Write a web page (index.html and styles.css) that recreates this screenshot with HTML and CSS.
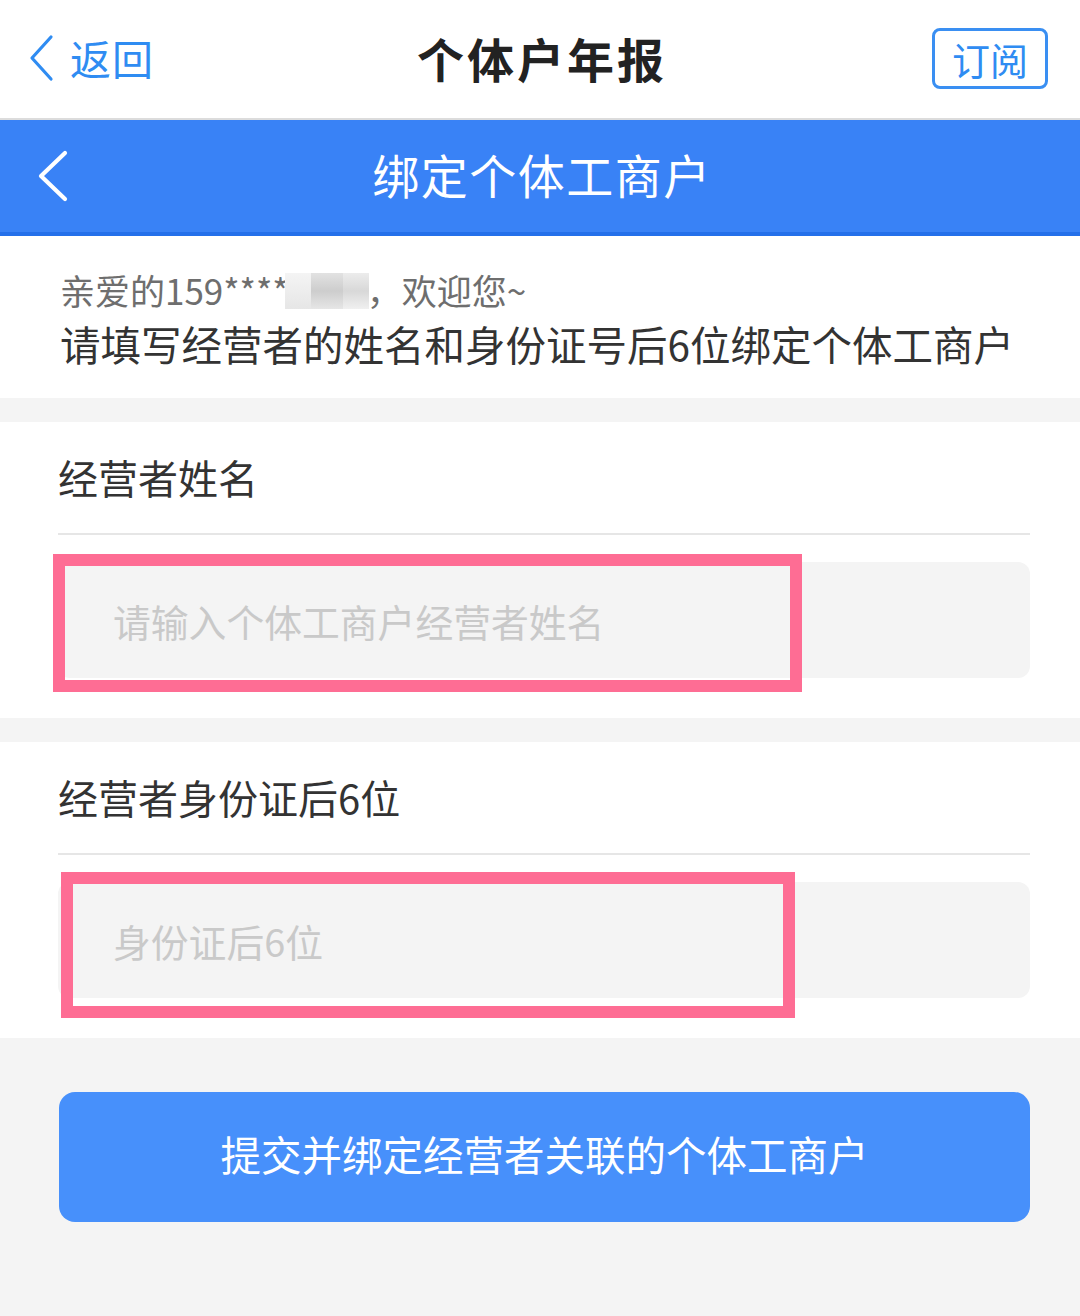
FILE: index.html
```html
<!DOCTYPE html>
<html lang="zh-CN">
<head>
<meta charset="utf-8">
<title>绑定个体工商户</title>
<link rel="stylesheet" href="styles.css">
</head>
<body>
<div class="page">
  <header class="topnav">
    <div class="back">
      <svg class="back-chev" width="26" height="48" viewBox="0 0 26 48"><path d="M23 3 L4 24 L23 45" fill="none" stroke="#2f8cf2" stroke-width="3.2" stroke-linecap="round" stroke-linejoin="round"/></svg>
      <span class="back-text">返回</span>
    </div>
    <div class="nav-title">个体户年报</div>
    <div class="subscribe">订阅</div>
  </header>

  <div class="bluebar">
    <svg class="bar-chev" width="34" height="54" viewBox="0 0 34 54"><path d="M29 4 L5 27 L29 50" fill="none" stroke="#ffffff" stroke-width="4.2" stroke-linecap="round" stroke-linejoin="round"/></svg>
    <div class="bar-title">绑定个体工商户</div>
    <div class="bar-spacer"></div>
  </div>

  <section class="intro">
    <div class="greet"><span class="num">亲爱的159****<span class="blur"><i class="b1"></i><i class="b2"></i><i class="b3"></i></span></span>，欢迎您~</div>
    <div class="lead">请填写经营者的姓名和身份证号后6位绑定个体工商户</div>
  </section>

  <section class="field">
    <div class="label">经营者姓名</div>
    <div class="divider"></div>
    <div class="input"><span class="ph">请输入个体工商户经营者姓名</span></div>
    <div class="mark mark-1"></div>
  </section>

  <section class="field">
    <div class="label">经营者身份证后6位</div>
    <div class="divider"></div>
    <div class="input"><span class="ph">身份证后6位</span></div>
    <div class="mark mark-2"></div>
  </section>

  <div class="actions">
    <button class="submit">提交并绑定经营者关联的个体工商户</button>
  </div>
</div>
</body>
</html>
```

FILE: styles.css
```css
* { box-sizing: border-box; }
html, body { margin: 0; padding: 0; }
body {
  background: #f4f4f4;
  font-family: "Noto Sans CJK SC", "Noto Sans", sans-serif;
  color: #333;
}
.page { width: 1080px; min-height: 1316px; background: #f4f4f4; }

.topnav {
  height: 120px;
  background: #fff;
  border-bottom: 2px solid #dcdcdc;
  display: grid;
  grid-template-columns: 1fr auto 1fr;
  align-items: center;
  padding: 0 32px 0 28px;
}
.back { display: flex; align-items: center; gap: 16px; color: #2f8cf2; margin-top: -3px; }
.back-chev { display: block; }
.back-text { font-size: 41px; line-height: 1; letter-spacing: 1px; }
.nav-title { font-size: 47px; font-weight: 700; color: #222; letter-spacing: 3px; line-height: 1; margin: -4px 0 0 8px; }
.subscribe {
  justify-self: end;
  width: 116px; height: 61px;
  border: 3px solid #3a8ff2;
  border-radius: 8px;
  color: #2f8cf2;
  font-size: 38px;
  display: flex; align-items: center; justify-content: center;
  margin-top: -2px;
}

.bluebar {
  height: 116px;
  background: #3982f6;
  border-bottom: 4px solid #2470ea;
  display: grid;
  grid-template-columns: 1fr auto 1fr;
  align-items: center;
  padding: 0 36px;
}
.bar-chev { display: block; }
.bar-title { color: #fff; font-size: 47px; letter-spacing: 1.5px; line-height: 1; margin: -6px 0 0 4px; }

.intro {
  background: #fff;
  padding: 31px 60px 26px;
  margin-bottom: 24px;
}
.greet { font-size: 35px; line-height: 46px; color: #6e6e6e; display: flex; align-items: center; white-space: nowrap; }
.num { position: relative; margin-right: 78px; }
.blur { position: absolute; right: -80px; top: 6px; display: flex; width: 84px; height: 36px; }
.blur i { display: block; height: 100%; }
.blur .b1 { width: 26px; background: linear-gradient(#f4f4f4, #e6e6e6); }
.blur .b2 { width: 32px; background: linear-gradient(#e2e2e2, #cdcdcd 50%, #e6e6e6); }
.blur .b3 { width: 26px; background: linear-gradient(#ececec, #d8d8d8 50%, #f0f0f0); }
.lead { font-size: 40.5px; line-height: 56px; color: #333; margin-top: 3px; white-space: nowrap; }

.field {
  position: relative;
  background: #fff;
  padding: 27px 50px 40px 58px;
  margin-bottom: 24px;
}
.label { font-size: 40px; line-height: 56px; color: #333; }
.divider { height: 2px; background: #e6e6e6; margin-top: 28px; }
.input {
  margin-top: 27px;
  height: 116px;
  background: #f4f4f4;
  border-radius: 12px;
  display: flex; align-items: center;
  padding-left: 55px;
}
.ph { font-size: 37.8px; color: #c9c9c9; }

.mark {
  position: absolute;
  border: 12px solid #fe6d94;
  pointer-events: none;
}
.mark-1 { left: 53px; top: 132px; width: 749px; height: 138px; }
.mark-2 { left: 61px; top: 130px; width: 734px; height: 146px; }

.actions { padding: 30px 50px 0 59px; }
.submit {
  width: 100%;
  height: 130px;
  border: 0;
  border-radius: 16px;
  background: #4790fb;
  color: #fff;
  font-family: "Noto Sans CJK SC", "Noto Sans", sans-serif;
  font-size: 40.5px;
  line-height: 1;
  padding: 0 0 6px;
}
```
